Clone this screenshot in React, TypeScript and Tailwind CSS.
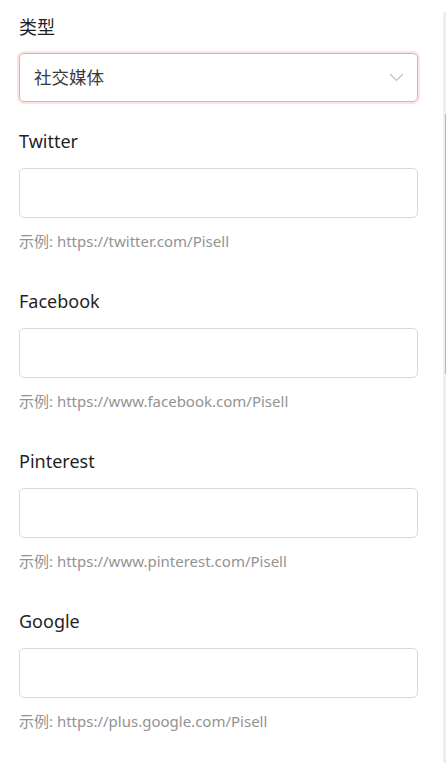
import React from 'react';

const fields = [
    { label: 'Twitter', hint: '示例: https://twitter.com/Pisell' },
    { label: 'Facebook', hint: '示例: https://www.facebook.com/Pisell' },
    { label: 'Pinterest', hint: '示例: https://www.pinterest.com/Pisell' },
    { label: 'Google', hint: '示例: https://plus.google.com/Pisell' },
];

const font = { fontFamily: '"Noto Sans", "Noto Sans CJK SC", sans-serif' };

export default function App() {
    return (
        <div className="relative w-[446px] h-[763px] overflow-hidden bg-white" style={font}>
            <div className="flex flex-col pt-[13px] pl-[19px] pr-[28px]">
                {/* Type select */}
                <div className="flex flex-col">
                    <span className="h-[28px] leading-[28px] text-[18px] text-[#1f1f1f]">类型</span>
                    <div className="mt-[12px] h-[49px] flex items-center justify-between rounded-[5px] border border-[#f5a8a2] shadow-[0_0_0_2px_#fde4e1] pl-[14px] pr-[13px]">
                        <span className="text-[17.5px] text-[#3a3a3a]">社交媒体</span>
                        <svg width="15" height="9" viewBox="0 0 15 9" fill="none">
                            <path d="M1 1 L7.5 7.5 L14 1" stroke="#bdbdbd" strokeWidth="1.1" />
                        </svg>
                    </div>
                </div>

                {fields.map((f, i) => (
                    <div key={f.label} className={`flex flex-col ${i === 0 ? 'mt-[25px]' : 'mt-[35px]'}`}>
                        <span className="h-[28px] leading-[28px] text-[18px] text-[#1f1f1f]">{f.label}</span>
                        <input
                            className="mt-[13px] h-[50px] w-full rounded-[5px] border border-[#d9d9d9] px-3 text-[16px] outline-none"
                        />
                        <span className="mt-[12px] h-[22px] leading-[22px] text-[15px] text-[#939393]">{f.hint}</span>
                    </div>
                ))}
            </div>

            {/* scrollbar */}
            <div className="absolute right-0 top-[12px] bottom-0 w-[3px] bg-[#efefef]">
                <div className="absolute right-0 top-[102px] h-[260px] w-[1px] bg-[#b5b5b5]" />
            </div>
        </div>
    );
}
